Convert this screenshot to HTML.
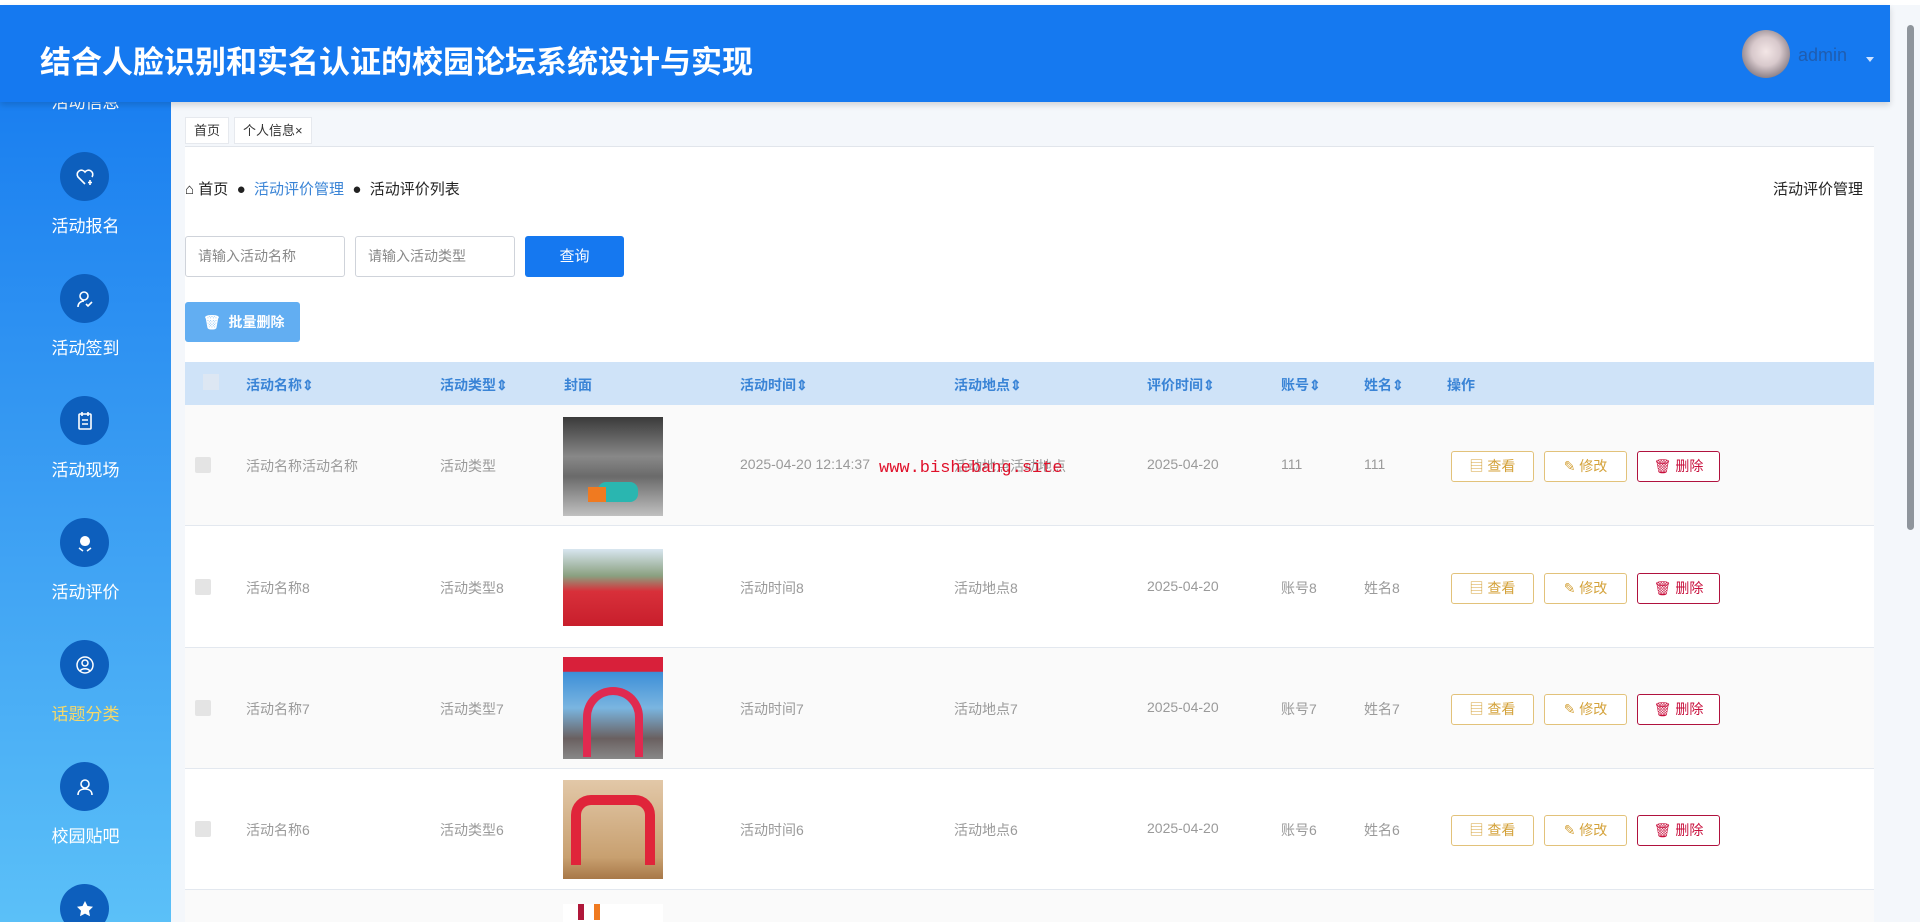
<!DOCTYPE html>
<html><head><meta charset="utf-8"><style>
*{margin:0;padding:0;box-sizing:border-box}
html,body{width:1920px;height:922px;overflow:hidden}
body{font-family:"Liberation Sans","Noto Sans CJK SC",sans-serif;background:#f4f7fb;position:relative}
.top{position:absolute;left:0;top:0;width:1920px;height:5px;background:#fff}
.hdr{position:absolute;left:0;top:5px;width:1890px;height:97px;background:#1579f0;box-shadow:0 3px 6px rgba(0,0,0,.15);z-index:3}
.hdr h1{position:absolute;left:40px;top:32px;color:#fff;font-size:31px;font-weight:bold}
.av{position:absolute;left:1742px;top:25px;width:48px;height:48px;border-radius:50%;background:radial-gradient(circle at 50% 45%,#f3e6e6 0,#d8c9cc 40%,#8a7f86 75%,#e8e0e3 100%)}
.adm{position:absolute;left:1798px;top:40px;color:#1f5db0;font-size:18px}
.car{position:absolute;left:1866px;top:52px;border:4px solid transparent;border-top:5px solid #cfe3ff}
.side{position:absolute;left:0;top:102px;width:171px;height:820px;background:linear-gradient(#1a7ff0,#3c9ff3 50%,#5bc0f8);overflow:hidden}
.ci{position:absolute;left:60px;width:49px;height:49px;border-radius:50%;background:#0d5fbd;display:flex;align-items:center;justify-content:center}
.lb{position:absolute;left:0;width:171px;text-align:center;color:#fff;font-size:17px}
.main{position:absolute;left:185px;top:146px;width:1689px;height:776px;background:#fff;overflow:hidden}
.tab{position:absolute;top:117px;height:27px;border:1px solid #e6e9ee;background:#fff;font-size:13px;color:#333;line-height:25px;padding:0 8px}
.tline{position:absolute;left:185px;top:146px;width:1689px;height:1px;background:#e1e5eb;z-index:2}
.bc{position:absolute;left:185px;top:178px;font-size:15px;color:#222}
.bc .a{color:#3a84d6}
.inp{position:absolute;top:236px;width:160px;height:41px;border:1px solid #cfd3da;border-radius:3px;font-size:14px;color:#888;line-height:39px;padding-left:12px;background:#fff}
.btn{position:absolute;left:525px;top:236px;width:99px;height:41px;background:#1578f0;border-radius:3px;color:#fff;font-size:15px;text-align:center;line-height:41px}
.bd{position:absolute;left:185px;top:302px;width:115px;height:40px;background:#62aef2;border-radius:3px;color:#fff;font-size:14px;line-height:40px;padding-left:18px;font-weight:bold}
.th{position:absolute;left:185px;top:362px;width:1689px;height:43px;background:#cfe3f8}
.th span{position:absolute;top:13px;font-size:14px;color:#3a84d6;font-weight:bold}
.row{position:absolute;left:185px;width:1689px;height:121px;border-bottom:1px solid #e3e8ef;overflow:hidden}
.row span{position:absolute;top:51px;font-size:14px;color:#9a9a9a}
.cb{position:absolute;left:10px;top:52px;width:16px;height:16px;background:#e4e4e4;border-radius:2px}
.img{position:absolute;left:378px;top:12px;width:100px;height:99px;overflow:hidden}
.b{position:absolute;top:46px;width:83px;height:31px;border:1px solid #e2c27a;border-radius:3px;font-size:14px;color:#d4a23a;text-align:center;line-height:29px;background:#fff}
.b.x{border-color:#b0123e;color:#c8103d}
.wm{position:absolute;left:879px;top:459px;color:#e0102a;font-family:"Liberation Mono",monospace;font-size:17px;z-index:4}
.sb{position:absolute;left:1904px;top:5px;width:16px;height:917px;background:#f4f7fb}
.sb div{position:absolute;left:3px;top:20px;width:7px;height:505px;background:#8f959c;border-radius:4px}
</style></head><body>
<div class="top"></div>
<div class="side">
<div class="lb" style="top:-14px">活动信息</div>
<div class="ci" style="top:50px"><svg width="20" height="20" viewBox="0 0 20 20" fill="none" stroke="#fff" stroke-width="1.6"><path d="M10 17 3 10a4 4 0 0 1 7-5 4 4 0 0 1 7 5"/><path d="M15 13v5M13 15.5h4"/></svg></div>
<div class="lb" style="top:110px">活动报名</div>
<div class="ci" style="top:172px"><svg width="20" height="20" viewBox="0 0 20 20" fill="none" stroke="#fff" stroke-width="1.6"><circle cx="9" cy="7" r="4"/><path d="M3 18c0-4 3-6 6-6M11 15l2 2 4-4"/></svg></div>
<div class="lb" style="top:232px">活动签到</div>
<div class="ci" style="top:294px"><svg width="18" height="20" viewBox="0 0 18 20" fill="none" stroke="#fff" stroke-width="1.6"><rect x="3" y="3" width="12" height="15" rx="1"/><path d="M6 1v4M12 1v4M6 9h6M6 13h6"/></svg></div>
<div class="lb" style="top:354px">活动现场</div>
<div class="ci" style="top:416px"><svg width="20" height="20" viewBox="0 0 20 20" fill="#fff"><path d="M5 8a5 5 0 0 1 10 0c0 3-2 5-5 5S5 11 5 8z"/><path d="M4 15l4 3M16 15l-4 3" stroke="#fff" stroke-width="1.5"/></svg></div>
<div class="lb" style="top:476px">活动评价</div>
<div class="ci" style="top:538px"><svg width="20" height="20" viewBox="0 0 20 20" fill="none" stroke="#fff" stroke-width="1.5"><circle cx="10" cy="10" r="8"/><circle cx="10" cy="8" r="3"/><path d="M5 16c2-3 8-3 10 0"/></svg></div>
<div class="lb" style="top:598px;color:#f5d86a">话题分类</div>
<div class="ci" style="top:660px"><svg width="20" height="20" viewBox="0 0 20 20" fill="none" stroke="#fff" stroke-width="1.6"><circle cx="10" cy="7" r="4"/><path d="M3 18c0-4 3-6 7-6s7 2 7 6"/></svg></div>
<div class="lb" style="top:720px">校园贴吧</div>
<div class="ci" style="top:782px"><svg width="20" height="20" viewBox="0 0 20 20" fill="#fff"><path d="M10 2l2.5 5 5.5.8-4 3.9 1 5.5-5-2.6-5 2.6 1-5.5-4-3.9 5.5-.8z"/></svg></div>
</div>
<div class="hdr"><h1>结合人脸识别和实名认证的校园论坛系统设计与实现</h1><div class="av"></div><div class="adm">admin</div><div class="car"></div></div>
<div class="main"></div>
<div class="tab" style="left:185px">首页</div>
<div class="tab" style="left:234px">个人信息×</div>
<div class="tline"></div>
<div class="bc">⌂ 首页 &nbsp;● &nbsp;<span class="a">活动评价管理</span> &nbsp;● &nbsp;活动评价列表</div>
<div style="position:absolute;left:1773px;top:178px;font-size:15px;color:#222">活动评价管理</div>
<div class="inp" style="left:185px">请输入活动名称</div>
<div class="inp" style="left:355px">请输入活动类型</div>
<div class="btn">查询</div>
<div class="bd">🗑&nbsp; 批量删除</div>
<div class="th"><span style="left:18px;top:12px;width:16px;height:16px;background:#dde7f3"></span><span style="left:61px">活动名称⇕</span><span style="left:255px">活动类型⇕</span><span style="left:379px">封面</span><span style="left:555px">活动时间⇕</span><span style="left:769px">活动地点⇕</span><span style="left:962px">评价时间⇕</span><span style="left:1096px">账号⇕</span><span style="left:1179px">姓名⇕</span><span style="left:1262px">操作</span></div>

<div class="row" style="top:405px;background:#fafafa"><div class="cb"></div><span style="left:61px">活动名称活动名称</span><span style="left:255px">活动类型</span><div class="img" style="background:linear-gradient(#3a3a3a,#888 40%,#6a6a6a 60%,#c0c0c0);"><div style="position:absolute;left:35px;top:65px;width:40px;height:20px;background:#2ab6b0;border-radius:8px"></div><div style="position:absolute;left:25px;top:70px;width:18px;height:15px;background:#f07a20"></div></div><span style="left:555px">2025-04-20 12:14:37</span><span style="left:769px">活动地点活动地点</span><span style="left:962px">2025-04-20</span><span style="left:1096px">111</span><span style="left:1179px">111</span><div class="b" style="left:1266px">▤ 查看</div><div class="b" style="left:1359px">✎ 修改</div><div class="b x" style="left:1452px">🗑 删除</div></div>

<div class="row" style="top:527px;background:#fff"><div class="cb"></div><span style="left:61px">活动名称8</span><span style="left:255px">活动类型8</span><div class="img" style="top:22px;height:77px;background:linear-gradient(#d8e6f0,#8aa080 35%,#d8303a 55%,#c81e2c)"></div><span style="left:555px">活动时间8</span><span style="left:769px">活动地点8</span><span style="left:962px">2025-04-20</span><span style="left:1096px">账号8</span><span style="left:1179px">姓名8</span><div class="b" style="left:1266px">▤ 查看</div><div class="b" style="left:1359px">✎ 修改</div><div class="b x" style="left:1452px">🗑 删除</div></div>

<div class="row" style="top:648px;background:#fafafa"><div class="cb"></div><span style="left:61px">活动名称7</span><span style="left:255px">活动类型7</span><div class="img" style="top:9px;height:102px;background:linear-gradient(#d8203a 0,#d8203a 14%,#3d8fd8 15%,#7ab5e0 50%,#6a6060 80%,#888)"><div style="position:absolute;left:20px;top:30px;width:60px;height:70px;border:8px solid #e02a50;border-bottom:none;border-radius:30px 30px 0 0"></div></div><span style="left:555px">活动时间7</span><span style="left:769px">活动地点7</span><span style="left:962px">2025-04-20</span><span style="left:1096px">账号7</span><span style="left:1179px">姓名7</span><div class="b" style="left:1266px">▤ 查看</div><div class="b" style="left:1359px">✎ 修改</div><div class="b x" style="left:1452px">🗑 删除</div></div>

<div class="row" style="top:769px;background:#fff"><div class="cb"></div><span style="left:61px">活动名称6</span><span style="left:255px">活动类型6</span><div class="img" style="top:11px;background:linear-gradient(#e2c8a8,#c8a070 78%,#a87848)"><div style="position:absolute;left:8px;top:15px;width:84px;height:70px;border:10px solid #e0243a;border-bottom:none;border-radius:20px 20px 0 0"></div></div><span style="left:555px">活动时间6</span><span style="left:769px">活动地点6</span><span style="left:962px">2025-04-20</span><span style="left:1096px">账号6</span><span style="left:1179px">姓名6</span><div class="b" style="left:1266px">▤ 查看</div><div class="b" style="left:1359px">✎ 修改</div><div class="b x" style="left:1452px">🗑 删除</div></div>

<div class="row" style="top:890px;height:32px;background:#fafafa;border:none"><div class="img" style="top:14px;height:18px;background:#fff"><div style="position:absolute;left:15px;top:0;width:6px;height:16px;background:#b0183a"></div><div style="position:absolute;left:31px;top:0;width:6px;height:16px;background:#f07a20"></div></div></div>

<div class="wm">www.bishebang.site</div>
<div class="sb"><div></div></div>
</body></html>
